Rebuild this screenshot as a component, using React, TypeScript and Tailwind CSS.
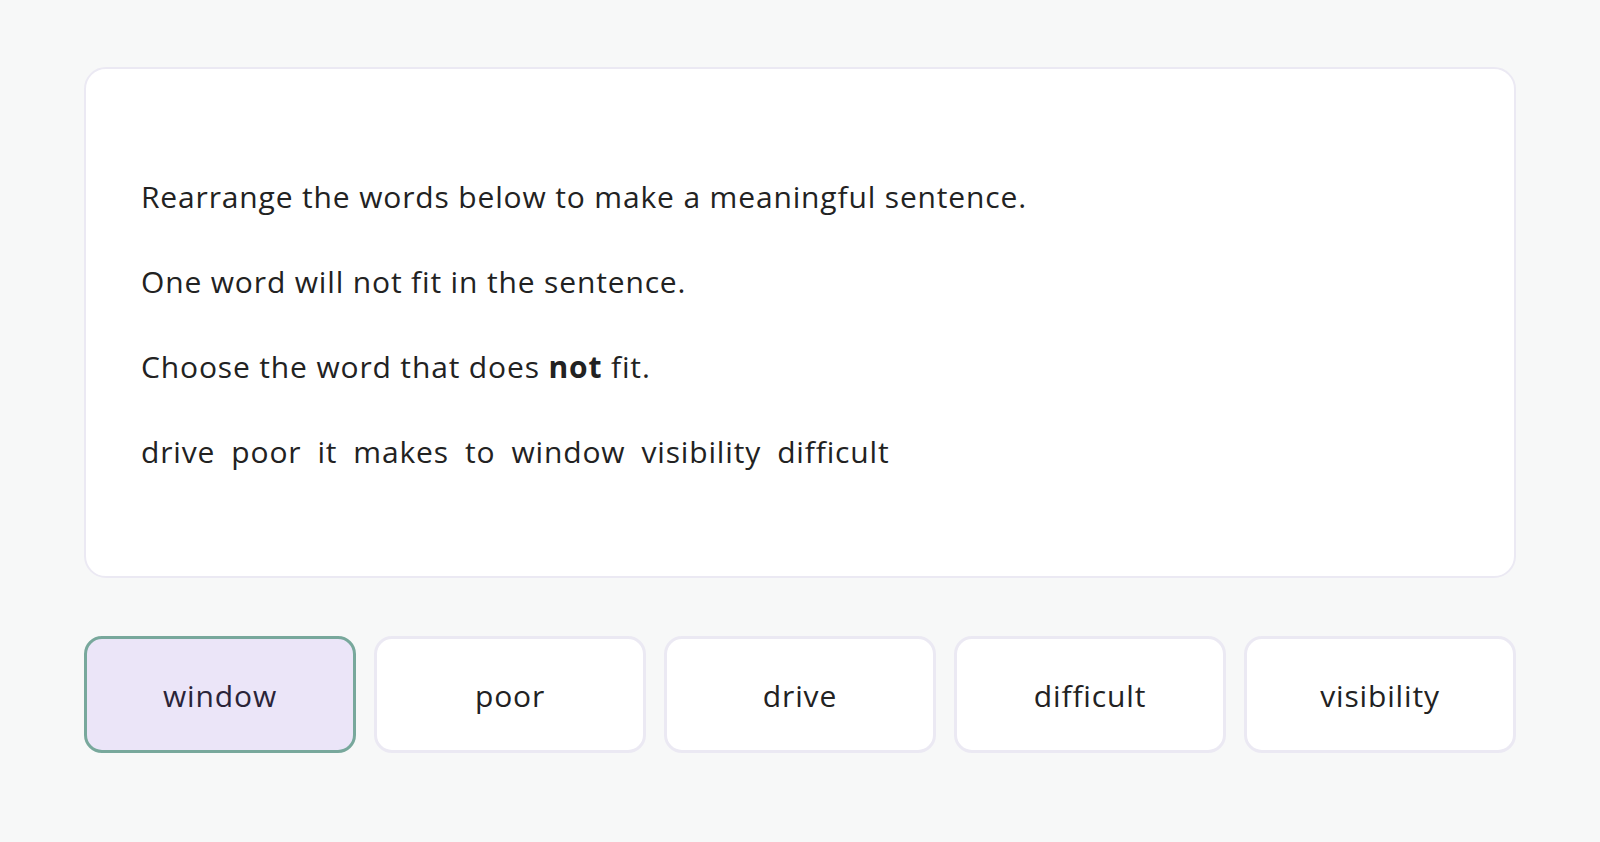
export default function App() {
  const options = ["window", "poor", "drive", "difficult", "visibility"]
  const selected = "window"

  return (
    <div
      className="min-h-screen w-full bg-[#f7f8f8] px-[84px] pt-[67px] text-[#222222] [font-variant-ligatures:none]"
      style={{ fontFamily: "'Open Sans', Lato, sans-serif" }}
    >
      <div className="rounded-[22px] border-2 border-[#ebe9f3] bg-white px-[55px] pt-[108px] pb-[104px]">
        <div className="flex flex-col gap-[45px] text-[30px] leading-[40px] tracking-[0.85px]">
          <p>Rearrange the words below to make a meaningful sentence.</p>
          <p>One word will not fit in the sentence.</p>
          <p>
            Choose the word that does <span className="font-bold">not</span> fit.
          </p>
          <p className="flex gap-[16px]">
            <span>drive</span>
            <span>poor</span>
            <span>it</span>
            <span>makes</span>
            <span>to</span>
            <span>window</span>
            <span>visibility</span>
            <span>difficult</span>
          </p>
        </div>
      </div>

      <div className="mt-[58px] flex gap-[18px]">
        {options.map((word) => (
          <button
            key={word}
            className={
              word === selected
                ? "flex h-[117px] flex-1 items-center justify-center rounded-[18px] border-[3px] border-[#78a89c] bg-[#ebe5f8] pt-[2px] text-[30px] tracking-[0.85px] text-[#2a2438]"
                : "flex h-[117px] flex-1 items-center justify-center rounded-[18px] border-[3px] border-[#ebe9f3] bg-white pt-[2px] text-[30px] tracking-[0.85px] text-[#222222]"
            }
          >
            {word}
          </button>
        ))}
      </div>
    </div>
  )
}
